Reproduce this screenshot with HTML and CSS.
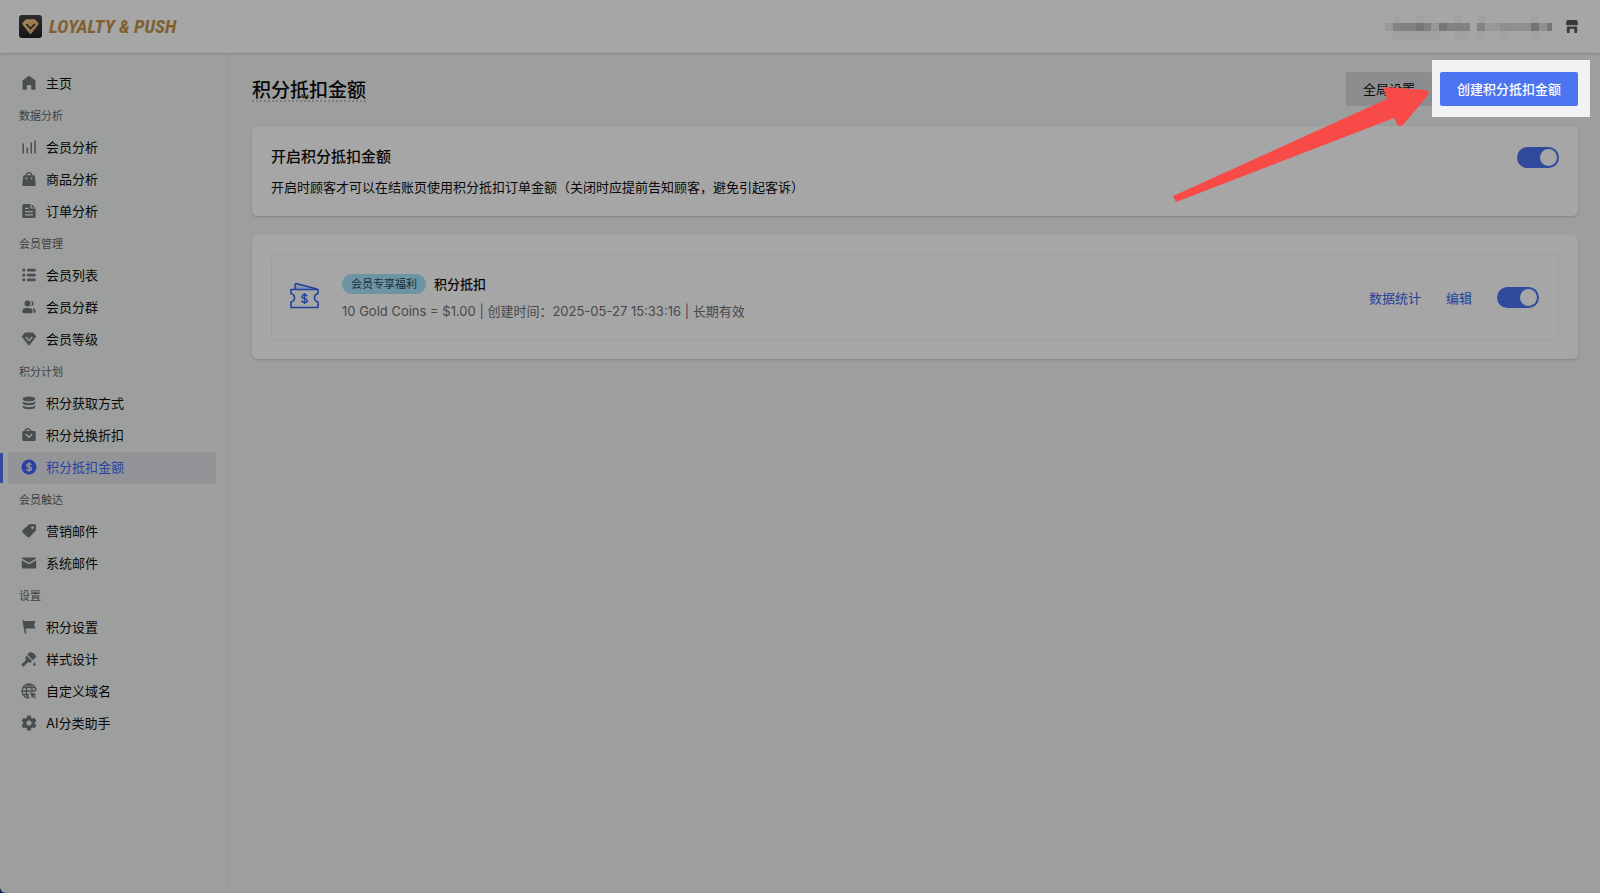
FILE: index.html
```html
<!DOCTYPE html>
<html lang="zh-CN">
<head>
<meta charset="utf-8">
<meta name="viewport" content="width=device-width, initial-scale=1">
<title>积分抵扣金额</title>
<link rel="stylesheet" href="styles.css">
</head>
<body>
<header class="topbar">
  <a class="brand" href="#">
    <svg class="brand-mark" viewBox="0 0 23 23" aria-hidden="true">
      <defs>
        <linearGradient id="tile" x1="0" y1="0" x2="0" y2="1"><stop offset="0" stop-color="#2d2d2d"/><stop offset="1" stop-color="#151515"/></linearGradient>
        <linearGradient id="gold" x1="0" y1="0" x2="1" y2="1"><stop offset="0" stop-color="#ab8a60"/><stop offset="1" stop-color="#8a693f"/></linearGradient>
      </defs>
      <rect width="23" height="23" rx="3" fill="url(#tile)"/>
      <path d="M7.6 4.2h7.8q.6 0 1 .5l2.900 3q.7.8.1 1.700l-7 9q-.9 1-1.800 0l-7-9q-.6-.9.1-1.700l2.900-3q.4-.5 1-.5z" fill="url(#gold)"/>
      <path d="M7.600 9.600l3.900 4 3.900-4" fill="none" stroke="#1d1d1d" stroke-width="1.500" stroke-linecap="round" stroke-linejoin="round"/>
    </svg>
    <span class="brand-name">LOYALTY &amp; PUSH</span>
  </a>
  <div class="account">
    <svg class="redacted" viewBox="0 0 168 24" shape-rendering="crispEdges" aria-hidden="true">
      <path fill="#a1a1a1" d="M8 0h8v8H8zM31 0h8v8h-8zM69 0h8v8h-8zM92 0h8v8h-8zM146 0h8v8h-8zM8 16h46v8H8zM69 16h15v8H69zM92 16h8v8h-8zM115 16h8v8h-8zM146 16h8v8h-8z"/>
      <path fill="#989898" d="M0 8h8v8H0zM46 8h8v8h-8zM100 8h15v8h-15z"/>
      <path fill="#8f8f8f" d="M115 8h31v8h-31zM154 8h8v8h-8z"/>
      <path fill="#828282" d="M8 8h23v8H8zM39 8h7v8h-7zM62 8h23v8H62zM92 8h8v8h-8z"/>
      <path fill="#757575" d="M31 8h8v8h-8zM54 8h8v8h-8zM146 8h8v8h-8zM162 8h5v8h-5z"/>
    </svg>
    <button class="store" type="button" aria-label="店铺">
      <svg viewBox="0 0 12 13" aria-hidden="true"><path fill="#35383b" d="M1.500 0h9q.5 0 .7.500L12 3.600q0 1.900-1.700 1.900-.9 0-1.400-.7-.6.700-1.400.7T6 4.800q-.6.700-1.500.7t-1.400-.7q-.5.700-1.400.7Q0 5.500 0 3.600L.8.500Q1 0 1.500 0zM.8 6.500q1.400.400 2.400-.2 1.300.8 2.800.1 1.500.7 2.800-.1 1 .6 2.400.2V12q0 .9-.9.900H8.400V10q0-1.200-1-1.200H4.600q-1 0-1 1.200v2.900H1.700q-.9 0-.9-.9z"/></svg>
    </button>
  </div>
</header>

<div class="layout">
  <nav class="sidebar" aria-label="主导航">
    <ul class="nav-list">
      <li><a class="nav-item" href="#"><svg viewBox="0 0 16 16"><path d="M8 1q.5 0 .9.300l4.900 3.800q.7.600.7 1.500v7.200q0 1-1 1H11q-.8 0-.8-.8v-3q0-1-1-1H6.800q-1 0-1 1v3q0 .8-.8.8H2.500q-1 0-1-1V6.600q0-.9.700-1.500l4.900-3.800Q7.500 1 8 1z"/></svg>主页</a></li>
    </ul>
    <h2 class="nav-heading">数据分析</h2>
    <ul class="nav-list">
      <li><a class="nav-item" href="#"><svg viewBox="0 0 16 16"><path d="M1.500 4.500H3v10H1.500zM5.500 8.500H7v6H5.500zM9.500 3.500H11v11H9.500zM13.300 1.500h1.500v13h-1.500z"/></svg>会员分析</a></li>
      <li><a class="nav-item" href="#"><svg viewBox="0 0 16 16"><path fill-rule="evenodd" d="M4.600 4.300Q4.800 1 8 1t3.400 3.300h1.500q.8 0 .9.800l.9 8.600q.1 1.200-1 1.200H2.300q-1.100 0-1-1.200l.9-8.600q.1-.8.900-.8zm1.400 0h4Q9.900 2.200 8 2.200T6 4.300zM5.300 6.500a.9.900 0 1 0 .01 0zM10.700 6.500a.9.900 0 1 0 .01 0z"/></svg>商品分析</a></li>
      <li><a class="nav-item" href="#"><svg viewBox="0 0 16 16"><path fill-rule="evenodd" d="M2.800 1h6.500v3.200q0 1.300 1.300 1.300h4v8q0 1.500-1.500 1.500H2.800q-1.500 0-1.500-1.500v-11Q1.300 1 2.800 1zm7.700.2 3.700 3.300h-3q-.7 0-.7-.7zM4 4.800v1.300h3.500V4.800zM4 8v1.300h8V8zm0 3.200v1.300h8v-1.300z"/></svg>订单分析</a></li>
    </ul>
    <h2 class="nav-heading">会员管理</h2>
    <ul class="nav-list">
      <li><a class="nav-item" href="#"><svg viewBox="0 0 16 16"><rect x="1.300" y="1.800" width="3" height="2.700" rx="1"/><rect x="6" y="1.800" width="8.700" height="2.700" rx="1"/><rect x="1.300" y="6.700" width="3" height="2.700" rx="1"/><rect x="6" y="6.700" width="8.700" height="2.700" rx="1"/><rect x="1.300" y="11.600" width="3" height="2.700" rx="1"/><rect x="6" y="11.600" width="8.700" height="2.700" rx="1"/></svg>会员列表</a></li>
      <li><a class="nav-item" href="#"><svg viewBox="0 0 16 16"><circle cx="6.500" cy="4.500" r="3"/><path d="M1.300 12.500q0-3.500 3.700-3.500h3q3.700 0 3.700 3.500 0 1.800-1.600 1.800H2.900q-1.600 0-1.600-1.800zM10 1.700q2.700.4 2.700 2.800T10 7.300q1.900-2.700 0-5.600zM11.700 9.100q3 .4 3 3.200 0 2-1.900 2 .6-2.900-1.100-5.200z"/></svg>会员分群</a></li>
      <li><a class="nav-item" href="#"><svg viewBox="0 0 16 16"><path fill-rule="evenodd" d="M4.400 1.500h7.200q.5 0 .8.400l2.500 3.200q.4.500 0 1l-6.200 7.900q-.7.800-1.400 0L1.100 6.100q-.4-.5 0-1l2.500-3.200q.3-.4.800-.4zM5.200 5.500l-1 1L8 10.400l3.800-3.900-1-1L8 8.400z"/></svg>会员等级</a></li>
    </ul>
    <h2 class="nav-heading">积分计划</h2>
    <ul class="nav-list">
      <li><a class="nav-item" href="#"><svg viewBox="0 0 16 16"><ellipse cx="8" cy="4" rx="6.300" ry="2.500"/><path d="M1.700 6.600q2.500 1.600 6.300 1.600t6.300-1.600v1.200q0 2.500-6.300 2.500T1.700 7.800zM1.700 10.600q2.500 1.600 6.300 1.600t6.300-1.600v1.200q0 2.500-6.300 2.500t-6.300-2.500z"/></svg>积分获取方式</a></li>
      <li><a class="nav-item" href="#"><svg viewBox="0 0 16 16"><path fill-rule="evenodd" d="M3.800 1.900l3.500-.8q.6-.1 1 .3l2.600 2.600h2.600q1.200 0 1.200 1.200v7.500q0 1.200-1.200 1.200h-11q-1.200 0-1.200-1.200V5q0-1 1.200-1h1.200zM5 3.200v.8h4L7.500 2.500zM5.200 6.500l-1 1L8 11.300l3.800-3.800-1-1L8 9.300z"/></svg>积分兑换折扣</a></li>
      <li><a class="nav-item active" href="#" aria-current="page"><svg viewBox="0 0 16 16"><circle cx="8" cy="8" r="7.500"/><path d="M10.400 5.900Q10 4.700 8 4.700T5.600 6.300Q5.600 7.600 8 8t2.400 1.700q0 1.600-2.400 1.600T5.600 10M8 3.300v9.400" fill="none" stroke="#929497" stroke-width="1.400"/></svg>积分抵扣金额</a></li>
    </ul>
    <h2 class="nav-heading">会员触达</h2>
    <ul class="nav-list">
      <li><a class="nav-item" href="#"><svg viewBox="0 0 16 16"><path fill-rule="evenodd" d="M9.500 1h4q1.500 0 1.500 1.500v4q0 1-.7 1.700l-5.700 5.900q-1.100 1-2.200 0L1.600 9.400q-1-1.100 0-2.200l6-5.500Q8.400 1 9.500 1zM11.500 3.200a1.400 1.400 0 1 0 .01 0z"/></svg>营销邮件</a></li>
      <li><a class="nav-item" href="#"><svg viewBox="0 0 16 16"><path d="M.8 3.600q.2-1 1.200-1h12q1 0 1.200 1L8 7.700zM.8 5.200 8 9.200l7.200-4v7q0 1.200-1.200 1.200H2q-1.200 0-1.200-1.200z"/></svg>系统邮件</a></li>
    </ul>
    <h2 class="nav-heading">设置</h2>
    <ul class="nav-list">
      <li><a class="nav-item" href="#"><svg viewBox="0 0 16 16"><path d="M1.300 1.600 2.800 1.300l.2.700h11.500l-1.400 3.800 1.400 3.700H4.500l.9 5-1.500.3z"/></svg>积分设置</a></li>
      <li><a class="nav-item" href="#"><svg viewBox="0 0 16 16"><path d="M8.600 1.200 10 .7l1 1.500 1.400-.4 3 3.700-3.600 3.700-5.600-5.600zM5.400 4.400l5.700 5.700-1.400 1.300q-1 .6-2-.1l-.6-.4-3.800 4q-1 1-2.200 0-1-1.200 0-2.200l4-3.800-.5-.8q-.7-1.200.2-2.200zM13.600 11q2.500 3.800-.1 3.800t.1-3.800z"/></svg>样式设计</a></li>
      <li><a class="nav-item" href="#"><svg viewBox="0 0 16 16"><path d="M15 7.500A7 7 0 1 0 8 15M1 8h13.500M2.200 4.500h11.600M2.200 11.500H8M8 1Q2 8 8 15M8 1q3.600 3.600 3 7" fill="none" stroke="#4a4d50" stroke-width="1.300"/><path d="M9 9l6.500 2.200-2.400 1.200 1.900 2-1 1-2-2-1 2.200z"/></svg>自定义域名</a></li>
      <li><a class="nav-item" href="#"><svg viewBox="0 0 16 16"><path fill-rule="evenodd" d="M6.300.6h3.400l.5 2.200 1.300.8 2.200-.7 1.700 3L13.800 7.400v1.300l1.600 1.500-1.700 3-2.200-.7-1.300.8-.5 2.200H6.300l-.5-2.200-1.300-.8-2.200.7-1.700-3 1.600-1.500V7.400L.6 5.900l1.700-3 2.200.7 1.300-.8zM8 5.400a2.600 2.600 0 1 0 .01 0z"/></svg>AI分类助手</a></li>
    </ul>
  </nav>

  <main class="main">
    <div class="page-head">
      <h1 class="page-title">积分抵扣金额</h1>
      <div class="actions">
        <button class="btn btn-plain" type="button">全局设置</button>
        <div class="spotlight"><button class="btn btn-primary" type="button">创建积分抵扣金额</button></div>
        <svg class="arrow" viewBox="0 0 256 116" aria-hidden="true"><path d="M0 109 214 12 211 4Q210 0 214 0L252 3Q257 4 255 8L230 38Q226 41 224 37L221 31 3 115z" fill="#f84a47"/></svg>
      </div>
    </div>

    <section class="card switch-card">
      <div class="card-text">
        <h2 class="card-title" id="enable">开启积分抵扣金额</h2>
        <p class="card-desc">开启时顾客才可以在结账页使用积分抵扣订单金额（关闭时应提前告知顾客，避免引起客诉）</p>
      </div>
      <input class="toggle" type="checkbox" role="switch" aria-labelledby="enable" checked>
    </section>

    <section class="card">
      <div class="rule">
        <svg class="ticket" viewBox="0 0 29 27" aria-hidden="true">
          <path d="M5 7V2.500L6 1.500 27 7" fill="#8790ae" stroke="#22409c" stroke-width="1.500" stroke-linejoin="round"/>
          <path d="M1 7.500h27v4q-3.500 1-3.500 4.200T28 20v5.500H1V20q3.500-1 3.500-4.300T1 11.500z" fill="none" stroke="#22409c" stroke-width="1.600" stroke-linejoin="round"/>
          <path d="M17.200 14.300q-.4-1.600-2.700-1.600t-2.600 1.800q0 1.400 2.600 1.900t2.800 2q0 1.900-2.800 1.900T11.700 18.500M14.500 11v11" fill="none" stroke="#22409c" stroke-width="1.400"/>
        </svg>
        <div class="rule-text">
          <div class="rule-head">
            <span class="tag">会员专享福利</span>
            <h3 class="rule-title" id="rule">积分抵扣</h3>
          </div>
          <p class="rule-meta">10 Gold Coins = $1.00 | 创建时间：2025-05-27 15:33:16 | 长期有效</p>
        </div>
        <div class="rule-actions">
          <a class="link" href="#">数据统计</a>
          <a class="link" href="#">编辑</a>
          <input class="toggle" type="checkbox" role="switch" aria-labelledby="rule" checked>
        </div>
      </div>
    </section>
  </main>
</div>
</body>
</html>
```
FILE: styles.css
```css
* {
  box-sizing: border-box;
}

html {
  background: #08265a;
}

body {
  margin: 0;
  min-height: 100vh;
  display: flex;
  flex-direction: column;
  background: #9c9f9d;
  border-bottom-left-radius: 6px;
  color: #080808;
  font: 13px/20px Inter, "Noto Sans CJK SC", sans-serif;
}

h1, h2, h3, p, ul {
  margin: 0;
  padding: 0;
}

a {
  text-decoration: none;
}

button {
  font: inherit;
  border: 0;
  padding: 0;
  background: none;
}

.topbar {
  height: 53px;
  padding: 0 22px 0 19px;
  display: flex;
  align-items: center;
  justify-content: space-between;
  background: #a6a6a6;
  box-shadow: 0 1px 2px #858886;
  z-index: 1;
}

.brand {
  display: flex;
  align-items: center;
  gap: 7px;
}

.brand-mark {
  width: 23px;
  height: 23px;
}

.brand-name {
  color: #80602f;
  font: italic bold 19px/24px "Liberation Sans Narrow", "Roboto Condensed", "Open Sans Condensed", "DejaVu Sans Condensed", sans-serif;
}

.account {
  display: flex;
  align-items: center;
  gap: 13px;
}

.redacted {
  width: 168px;
  height: 24px;
}

.store svg {
  display: block;
  width: 12px;
  height: 13px;
}

.layout {
  flex: 1;
  display: flex;
}

.sidebar {
  flex: 0 0 229px;
  padding: 15px 12px 15px 0;
  border-right: 1px solid #959896;
}

.nav-list {
  list-style: none;
}

.nav-heading {
  padding-left: 19px;
  color: #3f4143;
  font-size: 11px;
  font-weight: 400;
  line-height: 32px;
}

.nav-item {
  position: relative;
  display: flex;
  align-items: center;
  gap: 9px;
  height: 32px;
  margin-left: 8px;
  padding: 0 0 2px 13px;
  color: #080808;
}

.nav-item svg {
  width: 16px;
  height: 16px;
  fill: #4a4d50;
}

.nav-item.active {
  background: #929497;
  color: #2742a3;
}

.nav-item.active svg {
  fill: #2742a3;
}

.nav-item.active::before {
  content: "";
  position: absolute;
  left: -8px;
  top: 1px;
  bottom: 1px;
  width: 3px;
  background: #2f4a9f;
}

.main {
  flex: 1;
  padding: 19px 22px 24px 23px;
}

.page-head {
  display: flex;
  align-items: center;
  justify-content: space-between;
  margin-bottom: 20px;
}

.page-title {
  padding-top: 6px;
  font-size: 19px;
  font-weight: 500;
  line-height: 18px;
  border-bottom: 2px dotted #7d807e;
}

.actions {
  position: relative;
  display: flex;
  gap: 8px;
}

.btn {
  position: relative;
  height: 34px;
  padding: 0 17px;
  border-radius: 2px;
}

.btn-plain {
  background: #8c8d8f;
  color: #080808;
}

.btn-primary {
  background: #4c73f0;
  color: #fff;
  font-weight: 500;
}

.spotlight {
  position: relative;
}

.spotlight::before {
  content: "";
  position: absolute;
  inset: -12px -12px -11px -8px;
  background: #f1f2f4;
}

.arrow {
  position: absolute;
  right: 149px;
  top: 15px;
  width: 256px;
  height: 116px;
  pointer-events: none;
}

.card {
  padding: 19px;
  margin-bottom: 19px;
  border-radius: 5px;
  background: #a6a6a6;
  box-shadow: 0 1px 2px #828583;
}

.switch-card {
  display: flex;
  align-items: flex-start;
  justify-content: space-between;
}

.card-title {
  margin-bottom: 8px;
  font-size: 15px;
  font-weight: 500;
  line-height: 24px;
}

.toggle {
  appearance: none;
  display: flex;
  justify-content: flex-end;
  flex: none;
  width: 42px;
  height: 21px;
  margin: 2px 0;
  padding: 2px;
  border-radius: 11px;
  background: #304a9e;
}

.toggle::before {
  content: "";
  width: 17px;
  height: 17px;
  border-radius: 50%;
  background: #a6a6a6;
}

.toggle:not(:checked) {
  justify-content: flex-start;
  background: #7d807e;
}

.rule {
  display: flex;
  align-items: center;
  padding: 19px 19px 18px 18px;
  border: 1px solid #9c9e9d;
  border-radius: 5px;
}

.ticket {
  align-self: flex-start;
  width: 29px;
  height: 27px;
  margin: 8px 23px 0 0;
}

.rule-text {
  flex: 1;
}

.rule-head {
  display: flex;
  align-items: center;
  gap: 8px;
  margin-bottom: 7px;
}

.tag {
  padding: 0 9px;
  border-radius: 10px;
  background: #6c94a5;
  color: #18303a;
  font-size: 11px;
  line-height: 20px;
}

.rule-title {
  font-size: 13px;
  font-weight: 500;
}

.rule-meta {
  color: #47494b;
}

.rule-actions {
  display: flex;
  align-items: center;
  gap: 25px;
}

.link {
  color: #22409c;
}
```
